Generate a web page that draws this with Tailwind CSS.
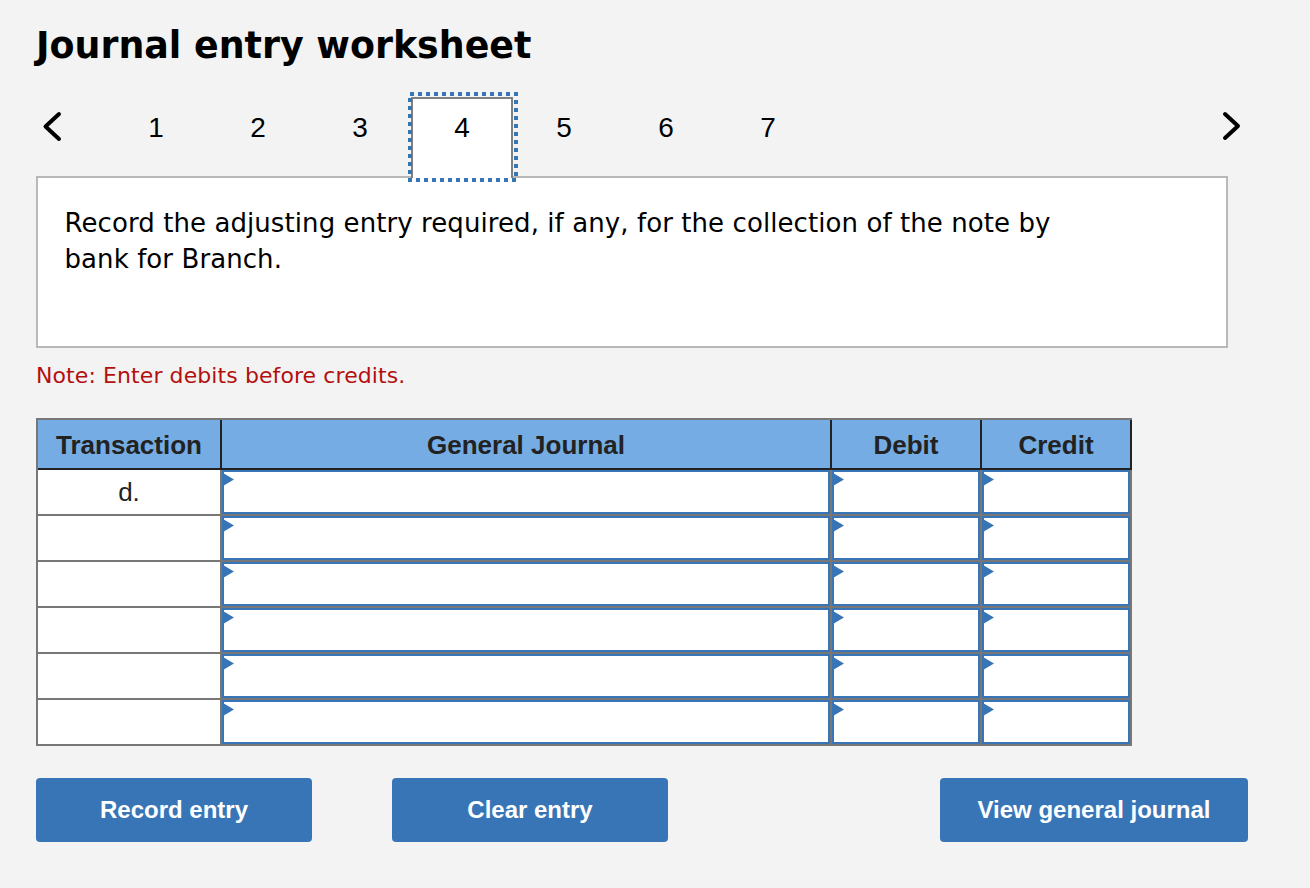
<!DOCTYPE html>
<html lang="en">
<head>
    <meta charset="UTF-8">
    <title>Journal entry worksheet</title>
    <script src="https://cdn.jsdelivr.net/npm/@tailwindcss/browser@4"></script>
</head>
<body class="bg-[#f3f3f3] font-['Liberation_Sans',Arial,sans-serif] text-black h-[888px] overflow-hidden">
    <div class="pl-9 pt-6">

        <!-- Title -->
        <h1 class="font-['DejaVu_Sans',Verdana,sans-serif] font-bold text-[36.4px] leading-[44px] h-[68px]">Journal entry worksheet</h1>

        <!-- Step nav -->
        <div class="flex items-start w-[1212px] h-[84px]">
            <svg class="w-[26px] h-[36px] mt-[16px] ml-[4px]" viewBox="0 0 26 36" fill="none" stroke="#000" stroke-width="4" stroke-linecap="round" stroke-linejoin="round"><path d="M19 6 L5.5 18.5 L19 31"/></svg>
            <div class="flex ml-[39px] text-[28px] leading-[32px] text-center">
                <div class="w-[102px] pt-[20px] h-[84px]">1</div>
                <div class="w-[102px] pt-[20px] h-[84px]">2</div>
                <div class="w-[102px] pt-[20px] h-[84px]">3</div>
                <div class="w-[102px] mt-[5px] pt-[13px] h-[81px] bg-white border-2 border-b-0 border-[#808080] relative z-10">
                    4
                    <svg class="absolute left-[-5px] top-[-7px] w-[110px] h-[90px]" viewBox="0 0 110 90" fill="none" stroke="#3875b7" stroke-width="4" stroke-dasharray="4 4"><rect x="2" y="2" width="106" height="86"/></svg>
                </div>
                <div class="w-[102px] pt-[20px] h-[84px]">5</div>
                <div class="w-[102px] pt-[20px] h-[84px]">6</div>
                <div class="w-[102px] pt-[20px] h-[84px]">7</div>
            </div>
            <svg class="w-[26px] h-[36px] mt-[16px] ml-auto mr-[4px]" viewBox="0 0 26 36" fill="none" stroke="#000" stroke-width="4" stroke-linecap="round" stroke-linejoin="round"><path d="M7 6 L20 18 L7 30"/></svg>
        </div>

        <!-- Instruction box -->
        <div class="w-[1192px] h-[172px] bg-white border-2 border-[#b8b8b8] px-[26.5px] pt-[27px] font-['DejaVu_Sans',Verdana,sans-serif] text-[26px] leading-[36px] tracking-[0.08px]">
            Record the adjusting entry required, if any, for the collection of the note by<br>bank for Branch.
        </div>

        <p class="font-['DejaVu_Sans',Verdana,sans-serif] text-[22px] leading-[28px] tracking-[0.09px] text-[#b30f0f] mt-[14px]">Note: Enter debits before credits.</p>

        <!-- Journal table -->
        <table class="mt-[28px] w-[1096px] border-t-2 border-l-2 border-[#777] block text-[#222]">
            <thead class="block">
                <tr class="flex h-[50px] bg-[#75ace3] text-[26px] font-bold">
                    <th class="w-[184px] flex items-center justify-center pt-[2px] border-r-2 border-b-2 border-[#222] font-bold">Transaction</th>
                    <th class="w-[610px] flex items-center justify-center pt-[2px] border-r-2 border-b-2 border-[#222] font-bold">General Journal</th>
                    <th class="w-[150px] flex items-center justify-center pt-[2px] border-r-2 border-b-2 border-[#222] font-bold">Debit</th>
                    <th class="w-[150px] flex items-center justify-center pt-[2px] border-r-2 border-b-2 border-[#222] font-bold">Credit</th>
                </tr>
            </thead>
            <tbody id="rows" class="block">
                <tr class="flex h-[46px] border-b-2 border-[#777]">
                    <td class="w-[184px] bg-white border-r-2 border-[#777] text-center text-[26px] leading-[44px]">d.</td>
                    <td class="w-[610px] border-r-2 border-[#777] bg-white"><div class="h-full border-2 border-[#3875b7] relative"><svg class="absolute -left-[1px] top-[1px] w-[11px] h-[13px]" viewBox="0 0 11 13"><path d="M0 0 L11 6.5 L0 13 Z" fill="#3875b7"/></svg></div></td>
                    <td class="w-[150px] border-r-2 border-[#777] bg-white"><div class="h-full border-2 border-[#3875b7] relative"><svg class="absolute -left-[1px] top-[1px] w-[11px] h-[13px]" viewBox="0 0 11 13"><path d="M0 0 L11 6.5 L0 13 Z" fill="#3875b7"/></svg></div></td>
                    <td class="w-[150px] border-r-2 border-[#777] bg-white"><div class="h-full border-2 border-[#3875b7] relative"><svg class="absolute -left-[1px] top-[1px] w-[11px] h-[13px]" viewBox="0 0 11 13"><path d="M0 0 L11 6.5 L0 13 Z" fill="#3875b7"/></svg></div></td>
                </tr>
            </tbody>
        </table>

        <!-- Buttons -->
        <div class="flex mt-8 text-white font-bold text-[24px]">
            <button class="w-[276px] h-16 bg-[#3875b7] rounded-[4px]">Record entry</button>
            <button class="w-[276px] h-16 bg-[#3875b7] rounded-[4px] ml-20">Clear entry</button>
            <button class="w-[308px] h-16 bg-[#3875b7] rounded-[4px] ml-[272px]">View general journal</button>
        </div>
    </div>

    <script>
        // the five empty rows are copies of the first one, minus the "d."
        const rows = document.getElementById('rows');
        for (let i = 0; i < 5; i++) {
            const row = rows.children[0].cloneNode(true);
            row.children[0].textContent = '';
            rows.appendChild(row);
        }
    </script>
</body>
</html>
